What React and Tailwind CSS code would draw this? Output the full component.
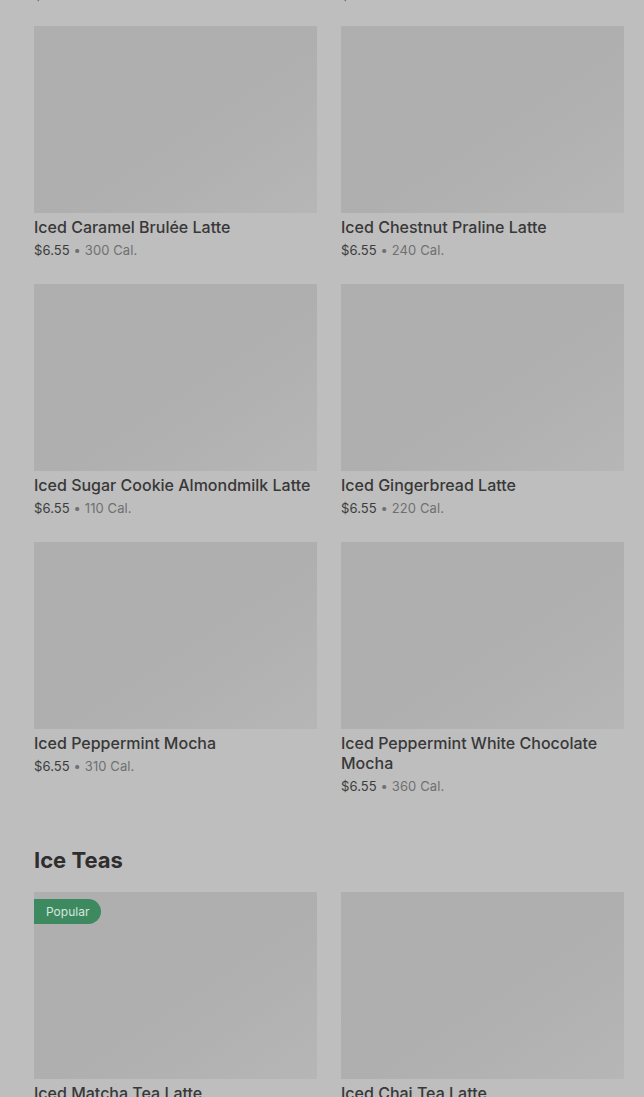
const font = { fontFamily: "Inter, 'Noto Sans', sans-serif" };

const rows = [
  [
    { name: "Iced Caramel Brulée Latte", cal: 300 },
    { name: "Iced Chestnut Praline Latte", cal: 240 },
  ],
  [
    { name: "Iced Sugar Cookie Almondmilk Latte", cal: 110 },
    { name: "Iced Gingerbread Latte", cal: 220 },
  ],
  [
    { name: "Iced Peppermint Mocha", cal: 310 },
    { name: "Iced Peppermint White Chocolate Mocha", cal: 360 },
  ],
];

const teas = [
  { name: "Iced Matcha Tea Latte", cal: 200, popular: true },
  { name: "Iced Chai Tea Latte", cal: 240 },
];

function Price({ cal }) {
  return (
    <p className="mt-[3px] text-[13px] leading-5 tracking-[0.1px]">
      <span className="text-[#3c3c3c]">$6.55</span>
      <span className="text-[#707070]"> • {cal} Cal.</span>
    </p>
  );
}

function Card({ item }) {
  return (
    <div className="flex flex-col">
      <div className="relative h-[187px] w-full bg-linear-to-br from-[#afafaf] from-55% to-[#b6b6b6]">
        {item.popular && (
          <span className="absolute left-0 top-[7px] flex h-[25px] items-center rounded-r-full bg-[#3d8a60] pl-3 pr-3 text-[12px] text-[#d9e6de]">
            Popular
          </span>
        )}
      </div>
      <h3 className="mt-1 text-[16px] font-medium leading-5 text-[#383838]">{item.name}</h3>
      <Price cal={item.cal} />
    </div>
  );
}

export default function App() {
  return (
    <div className="h-[1097px] overflow-hidden bg-[#bebebe]" style={font}>
      <div className="-mt-[18px] px-[34px] pr-[20px]">
        {/* previous row, scrolled mostly out of view */}
        <div className="grid grid-cols-2 gap-x-6">
          <Price cal={170} />
          <Price cal={250} />
        </div>
        <div className="mt-[21px] flex flex-col gap-6">
          {rows.map((r, i) => (
            <div key={i} className="grid grid-cols-2 gap-x-6">
              {r.map((it) => (
                <Card key={it.name} item={it} />
              ))}
            </div>
          ))}
        </div>
        <h2 className="mt-[50px] text-[22px] font-bold leading-7 text-[#2e2e2e]">Ice Teas</h2>
        <div className="mt-[18px] grid grid-cols-2 gap-x-6">
          {teas.map((it) => (
            <Card key={it.name} item={it} />
          ))}
        </div>
      </div>
    </div>
  );
}
